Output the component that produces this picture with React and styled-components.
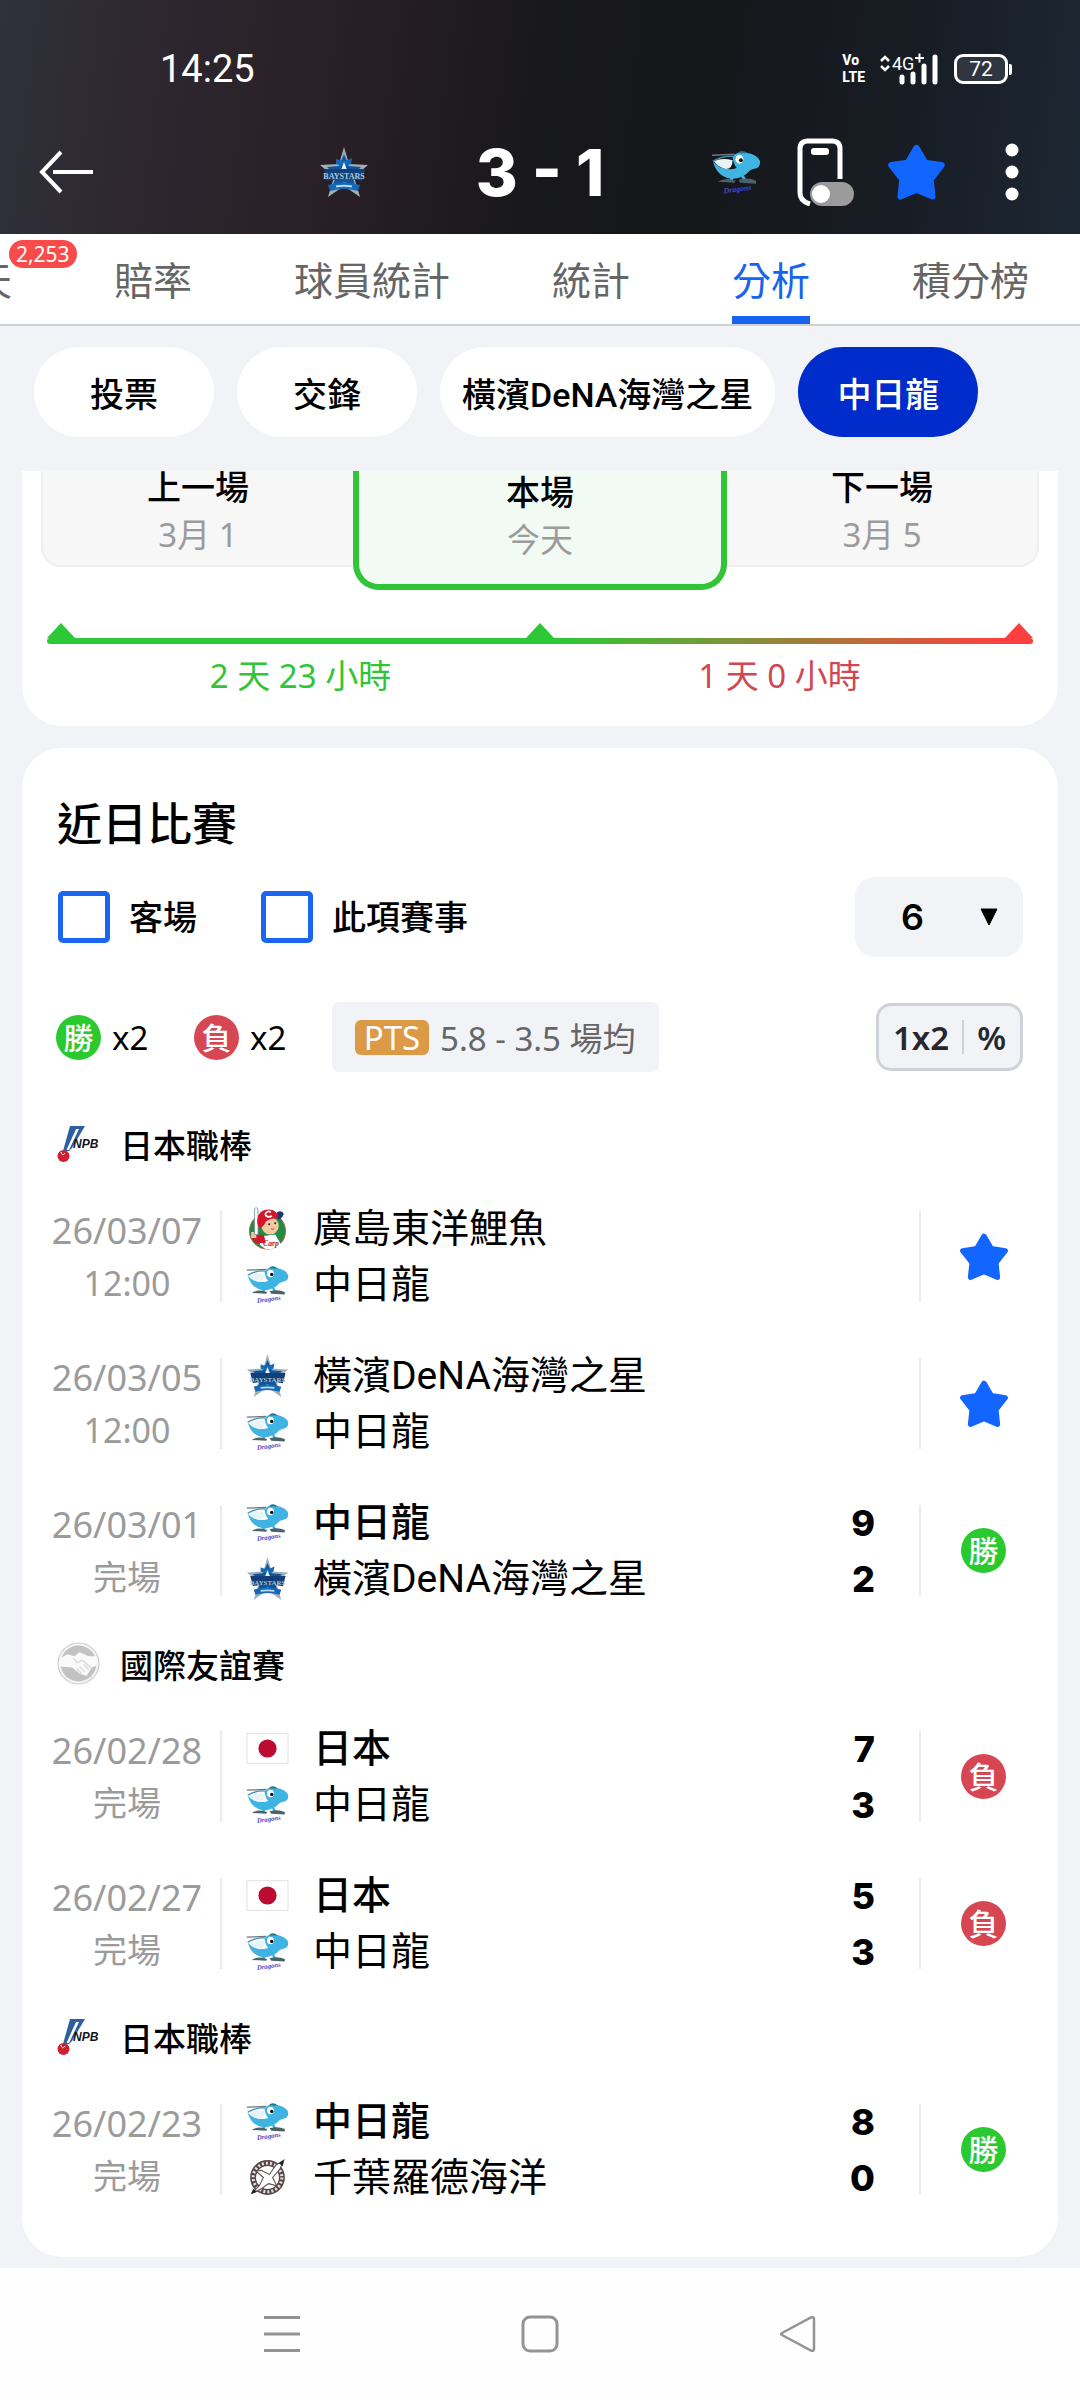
import React, { useState } from 'react';
import styled, { createGlobalStyle } from 'styled-components';

const GlobalStyle = createGlobalStyle`
  * {
    box-sizing: border-box;
  }
  body {
    margin: 0;
    background-color: #f1f3f7;
    color: #000;
    font-family: 'Noto Sans', 'Noto Sans CJK TC', sans-serif;
    font-size: 34px;
  }
  button, select, input {
    margin: 0;
    padding: 0;
    border: none;
    background: none;
    color: inherit;
    font: inherit;
    cursor: pointer;
  }
  svg {
    display: block;
    flex-shrink: 0;
  }
`;

const Page = styled.div`
  overflow: hidden;
`;

const Header = styled.header`
  height: 234px;
  padding-top: 41px;
  color: #fff;
  background: linear-gradient(
    97deg,
    #2f313b 0%,
    #2e272f 14%,
    #2a2027 30%,
    #18181c 50%,
    #15171b 66%,
    #181d25 84%,
    #1d2733 100%
  );
`;
const StatusBar = styled.div`
  display: flex;
  align-items: center;
  justify-content: space-between;
  height: 56px;
  padding: 0 68px 0 160px;
  font-family: Roboto, sans-serif;
`;
const Clock = styled.time`
  font-size: 38px;
`;
const StatusIcons = styled.div`
  display: flex;
  align-items: center;
  gap: 15px;
`;
const VoLte = styled.span`
  display: flex;
  flex-direction: column;
  font-size: 14px;
  font-weight: 800;
  line-height: 17px;
`;
const Battery = styled.span`
  display: flex;
  align-items: center;

  &::after {
    content: '';
    width: 3px;
    height: 11px;
    margin-left: 1px;
    background-color: #fff;
    border-radius: 0 2px 2px 0;
  }
`;
const BatteryLevel = styled.span`
  display: flex;
  align-items: center;
  justify-content: center;
  width: 54px;
  height: 30px;
  border: 3px solid #fff;
  border-radius: 9px;
  background-color: #30363f;
  font-size: 21px;
`;

const ScoreBar = styled.div`
  display: grid;
  grid-template-columns: 1fr auto 1fr;
  align-items: center;
  height: 150px;
`;
const BackButton = styled.button`
  justify-self: start;
  padding-left: 38px;
`;
const Teams = styled.div`
  display: flex;
  align-items: center;
  justify-content: space-between;
  width: 442px;
`;
const MainScore = styled.strong`
  font-family: Inter, sans-serif;
  font-size: 64px;
  font-weight: 800;
`;
const Actions = styled.div`
  display: flex;
  align-items: center;
  justify-content: flex-end;
  gap: 32px;
  padding-right: 34px;
`;
const MoreButton = styled.button`
  display: flex;
  justify-content: center;
  width: 68px;
`;

const Tabs = styled.nav`
  display: flex;
  justify-content: flex-end;
  gap: 102px;
  height: 92px;
  padding: 0 51px;
  background-color: #fff;
  border-bottom: 2px solid #ced0d4;
`;
const Tab = styled.a`
  position: relative;
  flex-shrink: 0;
  height: 90px;
  color: ${({ $active }) => ($active ? '#1862f0' : '#666')};
  border-bottom: 8px solid ${({ $active }) => ($active ? '#1862f0' : '#fff')};
  font-size: 39px;
  line-height: 92px;
  white-space: nowrap;
  text-decoration: none;
`;
const Badge = styled.span`
  position: absolute;
  top: 6px;
  left: 75px;
  padding: 0 7px;
  border-radius: 14px;
  background-color: #fa4b4b;
  color: #fff;
  font-size: 21px;
  line-height: 28px;
`;

const Chips = styled.div`
  display: flex;
  gap: 23px;
  padding: 21px 34px 34px;
`;
const Chip = styled.button`
  min-width: 180px;
  height: 90px;
  padding: 0 22px;
  border-radius: 45px;
  background-color: ${({ $active }) => ($active ? '#002ccb' : '#fff')};
  color: ${({ $active }) => ($active ? '#fff' : '#000')};
  font-family: Roboto, 'Noto Sans CJK TC', sans-serif;
  font-weight: 500;
  white-space: nowrap;
`;

const Card = styled.section`
  margin: 0 22px;
  background-color: #fff;
`;
const ScheduleCard = styled(Card)`
  padding: 0 19px 26px;
  border-radius: 0 0 40px 40px;
`;
const Schedule = styled.div`
  display: grid;
  grid-template-columns: 5fr 6fr 5fr;
  align-items: start;
`;
const Game = styled.div`
  height: 96px;
  background-color: #f7f7f7;
  border: 2px solid #eee;
  border-top: none;
  border-radius: ${({ $side }) => ($side === 'left' ? '0 0 0 20px' : '0 0 20px 0')};
  border-${({ $side }) => ($side === 'left' ? 'right' : 'left')}: none;
  text-align: center;
`;
const CurrentGame = styled(Game)`
  height: 119px;
  background-color: #f2fbf3;
  border: 6px solid #30c436;
  border-top: none;
  border-radius: 0 0 26px 26px;
`;
const GameTitle = styled.div`
  height: 40px;
  line-height: ${({ $low }) => ($low ? '42px' : '32px')};
  font-weight: 500;
`;
const GameDate = styled.div`
  color: #9b9b9b;
  font-size: 33px;
  line-height: ${({ $low }) => ($low ? '58px' : '48px')};
`;
const Timeline = styled.div`
  margin: 33px 6px 0;
`;
const Marks = styled.div`
  display: flex;
  justify-content: space-between;
`;
const Mark = styled.i`
  border: solid transparent;
  border-width: 0 14px 15px;
  border-bottom-color: ${({ $color }) => $color};
`;
const Line = styled.div`
  height: 6px;
  border-radius: 3px;
  background: linear-gradient(90deg, #2dc836 52%, #ff3f3f 97%);
`;
const Spans = styled.div`
  display: grid;
  grid-template-columns: 1fr 1fr;
  padding: 8px 14px 0;
  text-align: center;
  font-size: 33px;
  line-height: 48px;
`;
const Span = styled.span`
  color: ${({ $color }) => $color};
`;

const RecentCard = styled(Card)`
  margin-top: 22px;
  margin-bottom: 11px;
  padding: 45px 0 34px;
  border-radius: 40px;
`;
const Title = styled.h2`
  margin: 0 35px;
  font-size: 45px;
  font-weight: 500;
  line-height: 62px;
`;
const Filters = styled.div`
  display: flex;
  align-items: center;
  margin: 22px 35px 0 36px;
  gap: 64px;
`;
const Check = styled.label`
  display: flex;
  align-items: center;
  gap: 19px;
  font-weight: 500;
  line-height: 46px;
`;
const CheckBox = styled.input`
  appearance: none;
  width: 52px;
  height: 52px;
  border: 5px solid #1a66f0;
  border-radius: 5px;

  &:checked {
    background-color: #1a66f0;
  }
`;
const CountField = styled.div`
  display: grid;
  align-items: center;
  width: 168px;
  height: 80px;
  margin-left: auto;
  border-radius: 20px;
  background-color: #f2f3f7;

  > * {
    grid-area: 1 / 1;
  }
`;
const CountSelect = styled.select`
  appearance: none;
  height: 80px;
  padding-left: 46px;
  font-family: Inter, sans-serif;
  font-size: 36px;
  font-weight: 600;
`;
const CountArrow = styled.svg`
  justify-self: end;
  margin-right: 25px;
  pointer-events: none;
`;

const Stats = styled.div`
  display: flex;
  align-items: center;
  height: 70px;
  margin: 45px 35px 32px 34px;
`;
const Tally = styled.span`
  display: flex;
  align-items: center;
  gap: 11px;
  width: 138px;
  font-size: 33px;
`;
const Result = styled.span`
  display: flex;
  align-items: center;
  justify-content: center;
  width: 45px;
  height: 45px;
  border-radius: 50%;
  background-color: ${({ $win }) => ($win ? '#2bc930' : '#d64753')};
  color: #fff;
  font-size: 30px;
  font-weight: 500;
  line-height: 45px;
`;
const Average = styled.span`
  display: flex;
  align-items: center;
  gap: 11px;
  height: 70px;
  padding: 0 23px;
  border-radius: 7px;
  background-color: #f1f3f7;
  color: #666;
  font-size: 33px;
  white-space: nowrap;
`;
const Points = styled.span`
  width: 74px;
  border-radius: 6px;
  background-color: #dd9a46;
  color: #fff;
  line-height: 35px;
  text-align: center;
`;
const OddsButton = styled.button`
  display: flex;
  align-items: center;
  justify-content: center;
  gap: 13px;
  width: 147px;
  height: 68px;
  margin-left: auto;
  border: 3px solid #cfd2d8;
  border-radius: 15px;
  background-color: #f1f3f7;
  color: #26282c;
  font-size: 33px;
  font-weight: 600;
`;
const OddsRule = styled.span`
  width: 2px;
  height: 34px;
  background-color: #cfd2d8;
`;

const League = styled.h3`
  display: flex;
  align-items: center;
  gap: 20px;
  height: 79px;
  margin: 0 35px;
  font-size: 33px;
  font-weight: 500;
`;
const Matches = styled.ul`
  margin: 0;
  padding: 0;
  list-style: none;
`;
const Match = styled.li`
  display: flex;
  align-items: center;
  height: 147px;
  padding: 0 12px;
`;
const MatchTime = styled.div`
  width: 186px;
  color: #9b9b9b;
  line-height: 52px;
  text-align: center;
`;
const MatchDate = styled.div`
  font-size: 36px;
`;
const Sides = styled.div`
  flex: 1;
  display: flex;
  flex-direction: column;
  justify-content: center;
  height: 91px;
  padding: 0 44px 0 24px;
  border-left: 2px solid #ebebeb;
  border-right: 2px solid #ebebeb;
`;
const Side = styled.div`
  display: flex;
  align-items: center;
  height: 56px;
`;
const TeamName = styled.span`
  flex: 1;
  padding: 0 0 7px 24px;
  font-family: Roboto, 'Noto Sans CJK TC', sans-serif;
  font-size: 39px;
  font-weight: ${({ $bold }) => ($bold ? 500 : 400)};
`;
const Score = styled.span`
  font-family: Inter, sans-serif;
  font-size: 36px;
  font-weight: 800;
`;
const MatchEnd = styled.div`
  display: flex;
  justify-content: center;
  width: 125px;
`;

const SystemBar = styled.nav`
  display: flex;
  align-items: center;
  justify-content: center;
  gap: 216px;
  height: 132px;
  background-color: #fefefe;
`;

const StarIcon = ({ size }) => (
  <svg width={size} height={size} viewBox="0 0 48 48">
    <path
      d="M24 4L31 16L44.500 18L35.500 29.500L37 43.500L24 38L11 43.500L12.500 29.500L3.500 18L17 16Z"
      fill="#1266ff"
      stroke="#1266ff"
      strokeWidth="5"
      strokeLinejoin="round"
    />
  </svg>
);

const BayStars = ({ size }) => (
  <svg width={size} height={size} viewBox="0 0 50 50">
    <path
      d="M25 0L30 17L49 18L35 30L41 50L25 39L9 50L15 30L1 18L20 17Z"
      fill="#9fb0b8"
    />
    <path
      d="M25 7L30 19L42 20L33 29L38 43L25 35L12 43L17 29L8 20L20 19Z"
      fill="#0d57a0"
    />
    <path d="M17 12q8 4 16-1l-1 6q-7 4-15 0z" fill="#1568b5" />
    <path d="M25 15l3 8h-6z" fill="#e8f3f8" />
    <path d="M5 22h41l-3 12q-18-4-35 0z" fill="#123f78" />
    <text
      x="25"
      y="32"
      textAnchor="middle"
      fontFamily="Liberation Serif, serif"
      fontWeight="700"
      fontSize="8"
      fill="#a9c9dc"
    >
      BAYSTARS
    </text>
    <path d="M9 38q16-5 32 0l-2 6q-14-4-28 0z" fill="#1568b5" />
    <path d="M17 39.500q8-1.500 16 0" stroke="#b9d9ec" strokeWidth="2" fill="none" />
  </svg>
);

const Dragons = ({ size }) => (
  <svg width={size} height={size} viewBox="0 0 51 48">
    <path d="M1 7L24 6" stroke="#6c757c" strokeWidth="1.500" />
    <path
      d="M2 13Q7 20 17 21Q26 22 29 17L40 22Q33 31 21 31Q6 29 2 13Z"
      fill="#3fb4e2"
    />
    <path d="M3 13Q11 9 22 12Q22 21 15 21Q7 19 3 13Z" fill="#e9f4f8" />
    <path d="M2 13Q12 7 23 8" stroke="#3f8fae" strokeWidth="1.500" fill="none" />
    <path
      d="M22 9Q25 3 35 4Q48 6 50 13Q51 20 43 21L36 24Q24 24 22 9Z"
      fill="#3fb4e2"
    />
    <path d="M27 5Q31 0 38 5" fill="#2b728d" />
    <ellipse cx="29" cy="11" rx="4" ry="4.500" fill="#fff" />
    <circle cx="30.500" cy="12" r="2" fill="#111" />
    <path d="M22 29l-2 4M32 28l3 5" stroke="#3fb4e2" strokeWidth="3" />
    <path
      d="M7 34Q15 29 25 33L24 35ZM28 32Q38 29 46 33L46 36L30 35Z"
      fill="#4a6368"
    />
    <text
      x="27"
      y="44"
      textAnchor="middle"
      transform="rotate(-8 27 42)"
      fontFamily="Liberation Serif, serif"
      fontStyle="italic"
      fontWeight="700"
      fontSize="8"
      fill="#4a45c4"
    >
      Dragons
    </text>
  </svg>
);

const Carp = ({ size }) => (
  <svg width={size} height={size} viewBox="0 0 44 50">
    <circle cx="22" cy="28" r="21" fill="#238b43" stroke="#b5583c" />
    <path d="M15 34L31 32L38 44Q31 50 20 49L13 44Z" fill="#fff" />
    <path d="M7 31L18 33L20 42L8 42L4 36Z" fill="#d0182c" />
    <path d="M3 29h6v7h-6z" fill="#f3c49c" />
    <path d="M7 2Q10-1 11 4L11 32L7 32Z" fill="#fff" stroke="#7c8fa0" />
    <circle cx="25" cy="22" r="10" fill="#f6cba4" />
    <path d="M10 18Q10 3 24 3Q34 4 35 13Q24 13 20 17Q18 24 12 24Z" fill="#d8142a" />
    <path d="M33 6Q39 3 41 8Q38 15 34 14Z" fill="#1c3c6c" />
    <path d="M26 6a4 3 0 1 0 1 4" stroke="#fff" strokeWidth="2" fill="none" />
    <circle cx="24" cy="20" r="1.200" fill="#222" />
    <circle cx="31" cy="19" r="1.200" fill="#222" />
    <path d="M26 25q2 2 4 0" stroke="#c0202c" fill="none" />
    <text
      x="26"
      y="45"
      textAnchor="middle"
      fontFamily="Liberation Serif, serif"
      fontStyle="italic"
      fontWeight="700"
      fontSize="9"
      fill="#c0142c"
    >
      Carp
    </text>
  </svg>
);

const Marines = ({ size }) => (
  <svg width={size} height={size} viewBox="0 0 42 42">
    <circle cx="21" cy="21" r="14" fill="none" stroke="#54474a" strokeWidth="6" />
    <circle
      cx="21"
      cy="21"
      r="14"
      fill="none"
      stroke="#e9dcdc"
      strokeWidth="3"
      strokeDasharray="2 2"
    />
    <circle cx="21" cy="21" r="11" fill="#fff" />
    <path
      d="M37 4L29 9L23 18L15 14L10 15L17 21L13 29L5 37L15 32L22 27L30 29L26 21L33 13Z"
      fill="#fff"
      stroke="#5b4b4e"
    />
    <path d="M37 4l-5 3 4 3zM5 37l2-5 4 3z" fill="#222" />
  </svg>
);

const Japan = ({ size }) => (
  <svg width={size} height={size} viewBox="0 0 45 45">
    <rect x="1" y="7" width="43" height="31" fill="#fff" stroke="#dedede" />
    <circle cx="22.500" cy="22.500" r="9.500" fill="#bc0a30" />
  </svg>
);

const Npb = () => (
  <svg width="43" height="38" viewBox="0 0 43 38">
    <path d="M13 1H28L15 23L12 26L6 26Z" fill="#2f5f9e" />
    <path d="M19 4H22L12 25L9.500 25Z" fill="#fff" />
    <circle cx="6.500" cy="31" r="6" fill="#cf1f33" />
    <path d="M4 27q1 5 4 1" stroke="#fff" fill="none" />
    <text
      x="16"
      y="23"
      fontFamily="Liberation Sans, sans-serif"
      fontStyle="italic"
      fontWeight="700"
      fontSize="12"
      fill="#15151a"
    >
      NPB
    </text>
  </svg>
);

const Friendly = () => (
  <svg width="43" height="43" viewBox="0 0 42 42">
    <circle cx="21" cy="21" r="20" fill="#f4f4f4" stroke="#cacaca" />
    <circle cx="21" cy="21" r="17.500" fill="#c2c2c2" />
    <path
      d="M3 16L10 12L17 14L22 10L31 14L39 14L39 23L34 25L29 33L22 31L15 25L3 24Z"
      fill="#fafafa"
    />
    <path
      d="M16 16L20 20L25 18L33 25M19 26L24 31M22 24L27 29M26 22L31 27"
      stroke="#dcdcdc"
      strokeWidth="1.500"
      fill="none"
    />
  </svg>
);

const logos = {
  baystars: BayStars,
  dragons: Dragons,
  carp: Carp,
  marines: Marines,
  japan: Japan,
};

const tabs = ['聊天', '賠率', '球員統計', '統計', '分析', '積分榜'];
const chips = ['投票', '交鋒', '橫濱DeNA海灣之星', '中日龍'];

const dragons = { logo: 'dragons', name: '中日龍' };
const baystars = { logo: 'baystars', name: '橫濱DeNA海灣之星' };
const japan = { logo: 'japan', name: '日本' };
const carp = { logo: 'carp', name: '廣島東洋鯉魚' };
const marines = { logo: 'marines', name: '千葉羅德海洋' };

const leagues = [
  {
    id: 1,
    name: '日本職棒',
    Icon: Npb,
    matches: [
      { date: '26/03/07', time: '12:00', teams: [carp, dragons] },
      { date: '26/03/05', time: '12:00', teams: [baystars, dragons] },
      {
        date: '26/03/01',
        time: '完場',
        teams: [dragons, baystars],
        score: [9, 2],
        win: true,
      },
    ],
  },
  {
    id: 2,
    name: '國際友誼賽',
    Icon: Friendly,
    matches: [
      { date: '26/02/28', time: '完場', teams: [japan, dragons], score: [7, 3] },
      { date: '26/02/27', time: '完場', teams: [japan, dragons], score: [5, 3] },
    ],
  },
  {
    id: 3,
    name: '日本職棒',
    Icon: Npb,
    matches: [
      {
        date: '26/02/23',
        time: '完場',
        teams: [dragons, marines],
        score: [8, 0],
        win: true,
      },
    ],
  },
];

const MatchRow = ({ match }) => {
  const { date, time, teams, score, win } = match;

  return (
    <Match>
      <MatchTime>
        <MatchDate>{date}</MatchDate>
        <div>{time}</div>
      </MatchTime>
      <Sides>
        {teams.map((team, i) => {
          const Logo = logos[team.logo];
          return (
            <Side key={team.name}>
              <Logo size={43} />
              <TeamName $bold={score && score[i] > score[1 - i]}>
                {team.name}
              </TeamName>
              {score && <Score>{score[i]}</Score>}
            </Side>
          );
        })}
      </Sides>
      <MatchEnd>
        {score ? (
          <Result $win={win}>{win ? '勝' : '負'}</Result>
        ) : (
          <button aria-label="收藏">
            <StarIcon size={50} />
          </button>
        )}
      </MatchEnd>
    </Match>
  );
};

const App = () => {
  const [away, setAway] = useState(false);
  const [sameLeague, setSameLeague] = useState(false);
  const [chip, setChip] = useState('中日龍');

  return (
    <Page>
      <GlobalStyle />
      <Header>
        <StatusBar>
          <Clock>14:25</Clock>
          <StatusIcons>
            <VoLte>
              <span>Vo</span>
              <span>LTE</span>
            </VoLte>
            <svg width="59" height="34" viewBox="0 0 59 34">
              <path
                d="M1 9L5 5L9 9M1 14L5 18L9 14"
                stroke="#fff"
                strokeWidth="2.500"
                fill="none"
              />
              <text x="12" y="18" fontFamily="Roboto" fontSize="18" fill="#fff">
                4G
              </text>
              <path d="M35 6H44M39.500 1.500V10.500" stroke="#fff" strokeWidth="2" />
              <path
                d="M22 25V30M33 22V30M44 14V30M55 5V30"
                stroke="#fff"
                strokeWidth="5"
                strokeLinecap="round"
              />
            </svg>
            <Battery>
              <BatteryLevel>72</BatteryLevel>
            </Battery>
          </StatusIcons>
        </StatusBar>
        <ScoreBar>
          <BackButton aria-label="返回">
            <svg width="56" height="44" viewBox="0 0 56 44">
              <path
                d="M23 2L4 22L23 42M15 22H55"
                stroke="#fff"
                strokeWidth="4"
                fill="none"
              />
            </svg>
          </BackButton>
          <Teams>
            <BayStars size={50} />
            <MainScore>3 - 1</MainScore>
            <Dragons size={50} />
          </Teams>
          <Actions>
            <button aria-label="懸浮比分">
              <svg width="59" height="68" viewBox="0 0 59 68">
                <path
                  d="M44 41V11Q44 3 36 3H12Q4 3 4 11V55Q4 63 14 66"
                  stroke="#fff"
                  strokeWidth="5"
                  fill="none"
                />
                <rect x="15" y="10" width="18" height="7" rx="3" fill="#fff" />
                <rect x="14" y="44" width="44" height="24" rx="12" fill="#9b9b9b" />
                <circle cx="25" cy="56" r="9" fill="#fff" />
              </svg>
            </button>
            <button aria-label="收藏">
              <StarIcon size={59} />
            </button>
            <MoreButton aria-label="更多">
              <svg width="14" height="58" viewBox="0 0 14 58" fill="#fff">
                <circle cx="7" cy="7" r="6.500" />
                <circle cx="7" cy="29" r="6.500" />
                <circle cx="7" cy="51" r="6.500" />
              </svg>
            </MoreButton>
          </Actions>
        </ScoreBar>
      </Header>

      <Tabs>
        {tabs.map((name) => (
          <Tab key={name} href="#" $active={name === '分析'}>
            {name}
            {name === '聊天' && <Badge>2,253</Badge>}
          </Tab>
        ))}
      </Tabs>

      <Chips>
        {chips.map((name) => (
          <Chip key={name} $active={name === chip} onClick={() => setChip(name)}>
            {name}
          </Chip>
        ))}
      </Chips>

      <ScheduleCard>
        <Schedule>
          <Game $side="left">
            <GameTitle>上一場</GameTitle>
            <GameDate>3月 1</GameDate>
          </Game>
          <CurrentGame>
            <GameTitle $low>本場</GameTitle>
            <GameDate $low>今天</GameDate>
          </CurrentGame>
          <Game $side="right">
            <GameTitle>下一場</GameTitle>
            <GameDate>3月 5</GameDate>
          </Game>
        </Schedule>
        <Timeline>
          <Marks>
            <Mark $color="#2dc836" />
            <Mark $color="#2dc836" />
            <Mark $color="#ff3f3f" />
          </Marks>
          <Line />
          <Spans>
            <Span $color="#30c436">2 天 23 小時</Span>
            <Span $color="#cf4853">1 天 0 小時</Span>
          </Spans>
        </Timeline>
      </ScheduleCard>

      <RecentCard>
        <Title>近日比賽</Title>
        <Filters>
          <Check>
            <CheckBox
              type="checkbox"
              checked={away}
              onChange={() => setAway(!away)}
            />
            客場
          </Check>
          <Check>
            <CheckBox
              type="checkbox"
              checked={sameLeague}
              onChange={() => setSameLeague(!sameLeague)}
            />
            此項賽事
          </Check>
          <CountField>
            <CountSelect aria-label="場數" defaultValue="6">
              <option value="6">6</option>
            </CountSelect>
            <CountArrow width="18" height="18" viewBox="0 0 18 18">
              <path d="M1 1H17L9 17Z" stroke="#000" strokeLinejoin="round" />
            </CountArrow>
          </CountField>
        </Filters>
        <Stats>
          <Tally>
            <Result $win>勝</Result>x2
          </Tally>
          <Tally>
            <Result>負</Result>x2
          </Tally>
          <Average>
            <Points>PTS</Points>5.8 - 3.5 場均
          </Average>
          <OddsButton>
            1x2
            <OddsRule />%
          </OddsButton>
        </Stats>
        {leagues.map(({ id, name, Icon, matches }) => (
          <React.Fragment key={id}>
            <League>
              <Icon />
              {name}
            </League>
            <Matches>
              {matches.map((match) => (
                <MatchRow key={match.date} match={match} />
              ))}
            </Matches>
          </React.Fragment>
        ))}
      </RecentCard>

      <SystemBar>
        <button aria-label="選單">
          <svg width="42" height="42" viewBox="0 0 42 42">
            <path
              d="M3 4.500H39M3 21H39M3 37.500H39"
              stroke="#949494"
              strokeWidth="3"
            />
          </svg>
        </button>
        <button aria-label="主頁">
          <svg width="42" height="42" viewBox="0 0 42 42">
            <rect
              x="4"
              y="4"
              width="34"
              height="34"
              rx="7"
              fill="none"
              stroke="#949494"
              strokeWidth="3"
            />
          </svg>
        </button>
        <button aria-label="返回">
          <svg width="42" height="42" viewBox="0 0 42 42">
            <path
              d="M5 20L34 4.500Q37 3.500 37 6V36Q37 38.500 34 37.500L5 22Q3 21 5 20Z"
              fill="none"
              stroke="#949494"
              strokeWidth="2.500"
            />
          </svg>
        </button>
      </SystemBar>
    </Page>
  );
};

export default App;
